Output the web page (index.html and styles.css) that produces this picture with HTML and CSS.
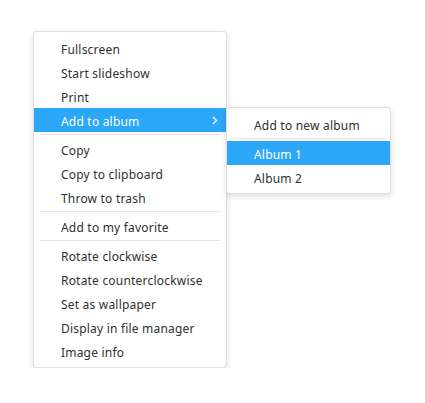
FILE: index.html
```html
<!DOCTYPE html>
<html>
<head>
<meta charset="utf-8">
<link rel="stylesheet" href="styles.css">
</head>
<body>
<div class="menu main">
  <div class="item">Fullscreen</div>
  <div class="item">Start slideshow</div>
  <div class="item">Print</div>
  <div class="item active has-sub">Add to album
    <svg class="chev" width="6" height="9" viewBox="0 0 6 9"><path d="M1 1 L4.5 4.5 L1 8" fill="none" stroke="#fff" stroke-width="1.3"/></svg>
    <div class="menu sub">
      <div class="item">Add to new album</div>
      <div class="sep"></div>
      <div class="item active">Album 1</div>
      <div class="item">Album 2</div>
    </div>
  </div>
  <div class="sep"></div>
  <div class="item">Copy</div>
  <div class="item">Copy to clipboard</div>
  <div class="item">Throw to trash</div>
  <div class="sep"></div>
  <div class="item">Add to my favorite</div>
  <div class="sep"></div>
  <div class="item">Rotate clockwise</div>
  <div class="item">Rotate counterclockwise</div>
  <div class="item">Set as wallpaper</div>
  <div class="item">Display in file manager</div>
  <div class="item">Image info</div>
</div>
</body>
</html>
```
FILE: styles.css
```css
html, body {
  margin: 0;
  background: #ffffff;
}
body {
  padding: 31px 0 0 33px;
  font-family: "Noto Sans", "DejaVu Sans", sans-serif;
  font-size: 12px;
  letter-spacing: 0.2px;
  color: #303030;
}
.menu {
  background: #ffffff;
  border: 1px solid rgba(0, 0, 0, 0.12);
  border-radius: 4px;
  box-shadow: 0 2px 6px rgba(0, 0, 0, 0.14);
  padding: 4px 0;
}
.main {
  width: 192px;
}
.item {
  height: 22px;
  padding-top: 2px;
  line-height: 24px;
  padding-left: 27px;
  position: relative;
  white-space: nowrap;
}
.item.active {
  background: #2ca7f8;
  color: #ffffff;
}
.sep {
  height: 5px;
  display: flex;
  align-items: center;
  padding: 0 5px 0 6px;
}
.sep::before {
  content: "";
  flex: 1;
  height: 1px;
  background: #e4e4e4;
}
.chev {
  position: absolute;
  right: 8px;
  top: 8px;
}
.sub {
  position: absolute;
  left: 100%;
  top: -1px;
  width: 163px;
  color: #303030;
  z-index: 2;
}
.sub .item {
  color: #303030;
}
.sub .item.active {
  color: #ffffff;
}
```
